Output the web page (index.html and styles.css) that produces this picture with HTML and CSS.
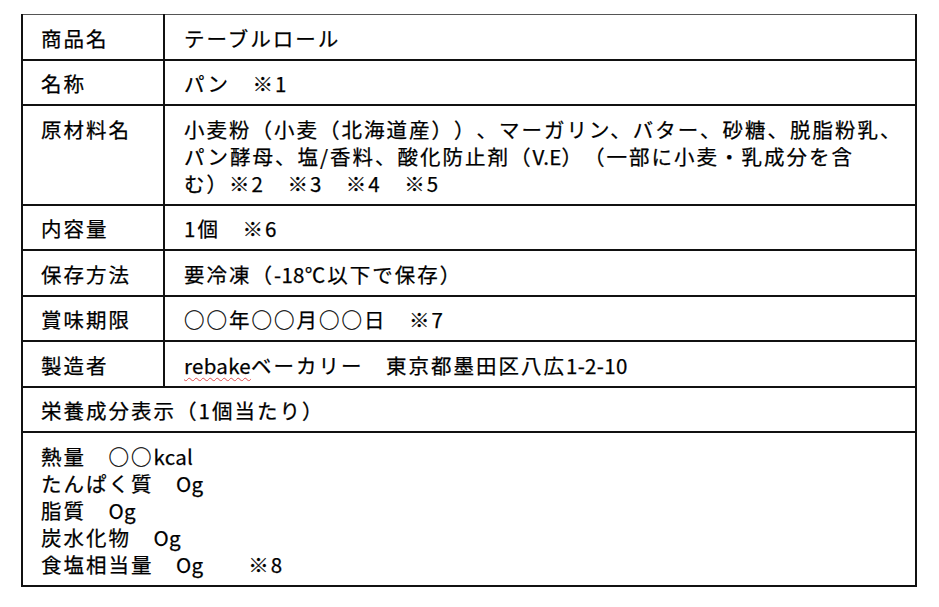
FILE: index.html
```html
<!DOCTYPE html>
<html lang="ja">
<head>
<meta charset="utf-8">
<title>商品表示</title>
<link rel="stylesheet" href="styles.css">
</head>
<body>
<table class="label">
  <tr><th class="key">商品名</th><td class="val">テーブルロール</td></tr>
  <tr><th class="key">名称</th><td class="val">パン　※1</td></tr>
  <tr><th class="key">原材料名</th><td class="val">小麦粉（小麦（北海道産））、マーガリン、バター、砂糖、脱脂粉乳、<br>パン酵母、塩/香料、酸化防止剤（<span class="en">V.E</span>）（一部に小麦・乳成分を含<br>む）※2　※3　※4　※5</td></tr>
  <tr><th class="key">内容量</th><td class="val">1個　※6</td></tr>
  <tr><th class="key">保存方法</th><td class="val">要冷凍（<span class="en">-18</span>℃以下で保存）</td></tr>
  <tr><th class="key">賞味期限</th><td class="val">○○年○○月○○日　※7</td></tr>
  <tr><th class="key">製造者</th><td class="val"><span class="en spell">rebake</span>ベーカリー　東京都墨田区八広<span class="en">1-2-10</span></td></tr>
  <tr><th class="full" colspan="2">栄養成分表示（1個当たり）</th></tr>
  <tr><td class="full" colspan="2">熱量　○○<span class="en">kcal</span><br>たんぱく質　<span class="en">Og</span><br>脂質　<span class="en">Og</span><br>炭水化物　<span class="en">Og</span><br>食塩相当量　<span class="en">Og</span>　　※8</td></tr>
</table>
</body>
</html>
```

FILE: styles.css
```css
html, body {
  margin: 0;
  padding: 0;
  background: #fff;
}

body {
  font-family: "Noto Sans CJK JP", "Noto Sans", sans-serif;
  color: #000;
}

.label {
  border-collapse: collapse;
  width: 896px;
  margin: 14px 0 0 21px;
  table-layout: fixed;
}

.label th,
.label td {
  border: 2px solid #111;
  font-size: 20.5px;
  font-weight: 400;
  line-height: 27px;
  letter-spacing: 2px;
  text-align: left;
  vertical-align: top;
  padding: 9.5px 4px 7px 18px;
  white-space: nowrap;
  text-spacing-trim: space-all;
  -webkit-text-stroke: 0.25px #000;
}

.label tr:first-child th,
.label tr:first-child td {
  border-top: 1px solid #555;
}

.key {
  width: 142px;
  box-sizing: border-box;
}

.label .val {
  padding-left: 19px;
}

.en {
  letter-spacing: 0.3px;
}

.spell {
  text-decoration-line: underline;
  text-decoration-style: wavy;
  text-decoration-color: #e05050;
  text-decoration-thickness: 1px;
  text-underline-offset: 3px;
  -webkit-text-stroke: 0.25px #000;
}
```
